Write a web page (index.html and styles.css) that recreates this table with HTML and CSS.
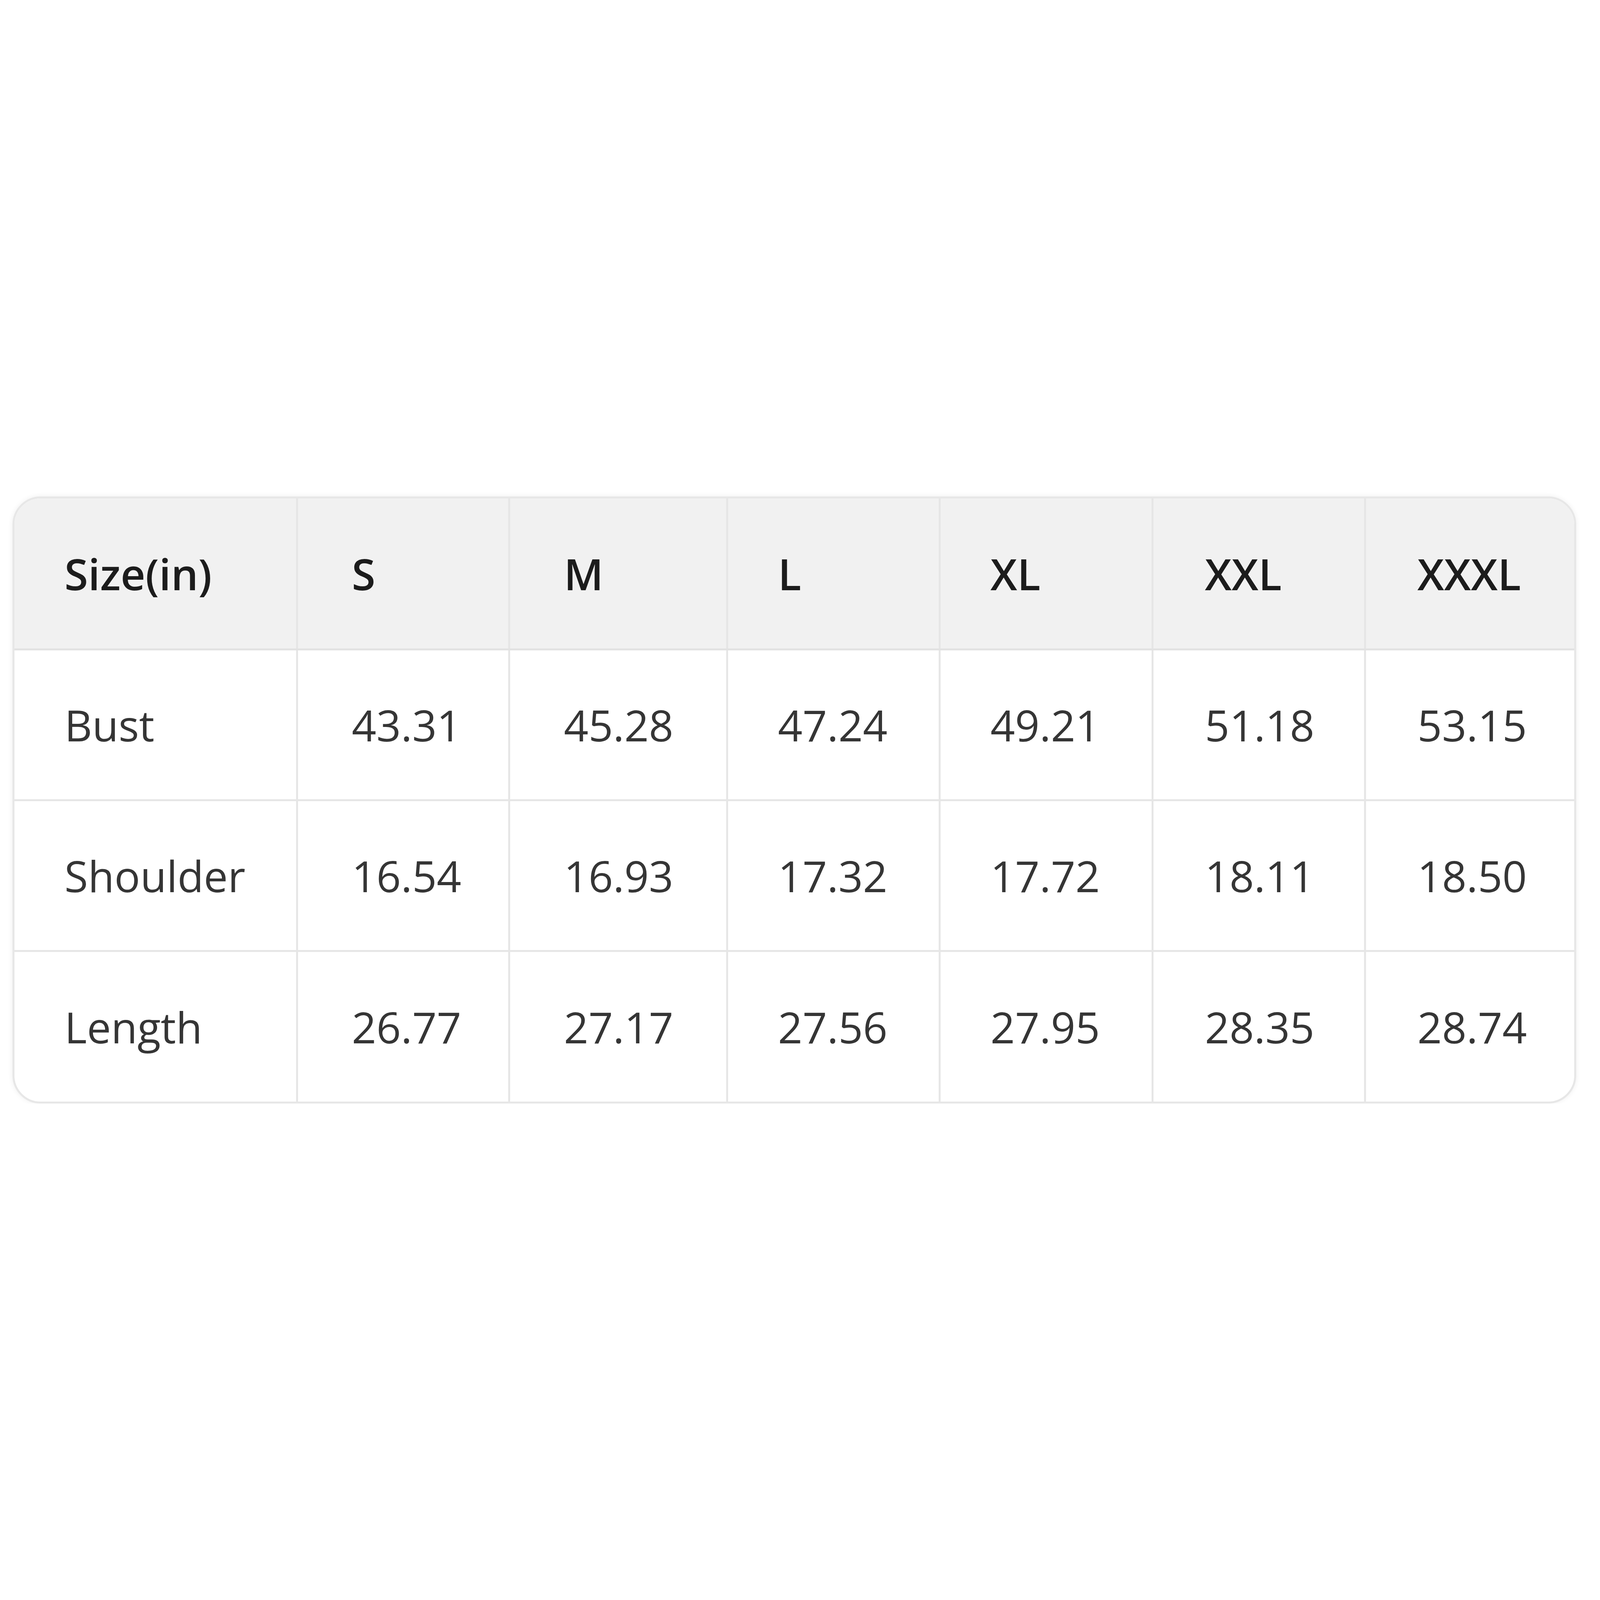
FILE: index.html
```html
<!DOCTYPE html>
<html lang="en">
<head>
<meta charset="utf-8">
<title>Size chart</title>
<link rel="stylesheet" href="styles.css">
</head>
<body>
<div class="page">
  <div class="chart">
    <table class="size-table">
      <colgroup>
        <col class="col-label">
        <col class="col-s">
        <col class="col-m">
        <col class="col-l">
        <col class="col-xl">
        <col class="col-xxl">
        <col class="col-xxxl">
      </colgroup>
      <thead>
        <tr>
          <th>Size(in)</th>
          <th>S</th>
          <th>M</th>
          <th>L</th>
          <th>XL</th>
          <th>XXL</th>
          <th>XXXL</th>
        </tr>
      </thead>
      <tbody>
        <tr>
          <td>Bust</td>
          <td>43.31</td>
          <td>45.28</td>
          <td>47.24</td>
          <td>49.21</td>
          <td>51.18</td>
          <td>53.15</td>
        </tr>
        <tr>
          <td>Shoulder</td>
          <td>16.54</td>
          <td>16.93</td>
          <td>17.32</td>
          <td>17.72</td>
          <td>18.11</td>
          <td>18.50</td>
        </tr>
        <tr>
          <td>Length</td>
          <td>26.77</td>
          <td>27.17</td>
          <td>27.56</td>
          <td>27.95</td>
          <td>28.35</td>
          <td>28.74</td>
        </tr>
      </tbody>
    </table>
  </div>
</div>
</body>
</html>
```
FILE: styles.css
```css
html, body {
  margin: 0;
  padding: 0;
  background: #ffffff;
}

body {
  font-family: "Open Sans", "Noto Sans", "Liberation Sans", sans-serif;
  color: #333333;
}

.page {
  padding: 1271px 0 0 32px;
}

.chart {
  width: 4003px;
  box-sizing: border-box;
  border: 5px solid #e7e7e7;
  border-radius: 72px;
  overflow: hidden;
  background: #ffffff;
  box-shadow: 0 0 14px rgba(0, 0, 0, 0.07);
}

.size-table {
  width: 100%;
  border-collapse: collapse;
  table-layout: fixed;
}

.col-label { width: 723px; }
.col-s { width: 543px; }
.col-m { width: 558px; }
.col-l { width: 544px; }
.col-xl { width: 545px; }
.col-xxl { width: 544px; }
.col-xxxl { width: 536px; }

.size-table th,
.size-table td {
  height: 386px;
  padding: 0 0 0 128px;
  box-sizing: border-box;
  border: 5px solid #e6e6e6;
  text-align: left;
  vertical-align: middle;
  font-size: 110px;
  line-height: 1.2;
  white-space: nowrap;
}

.size-table tr > :nth-child(2),
.size-table tr > :nth-child(3) {
  padding-left: 138px;
}

.size-table tr > :nth-child(6),
.size-table tr > :nth-child(7) {
  padding-left: 132px;
}

.size-table th {
  background: #f1f1f1;
  color: #1c1c1c;
  font-weight: 600;
  border-bottom-color: #e2e2e2;
}

.size-table td {
  font-weight: 400;
  color: #353535;
}

.size-table thead tr th {
  border-top: none;
}

.size-table tbody tr:last-child td {
  border-bottom: none;
}

.size-table tr > :first-child {
  border-left: none;
}

.size-table tr > :last-child {
  border-right: none;
}
```
